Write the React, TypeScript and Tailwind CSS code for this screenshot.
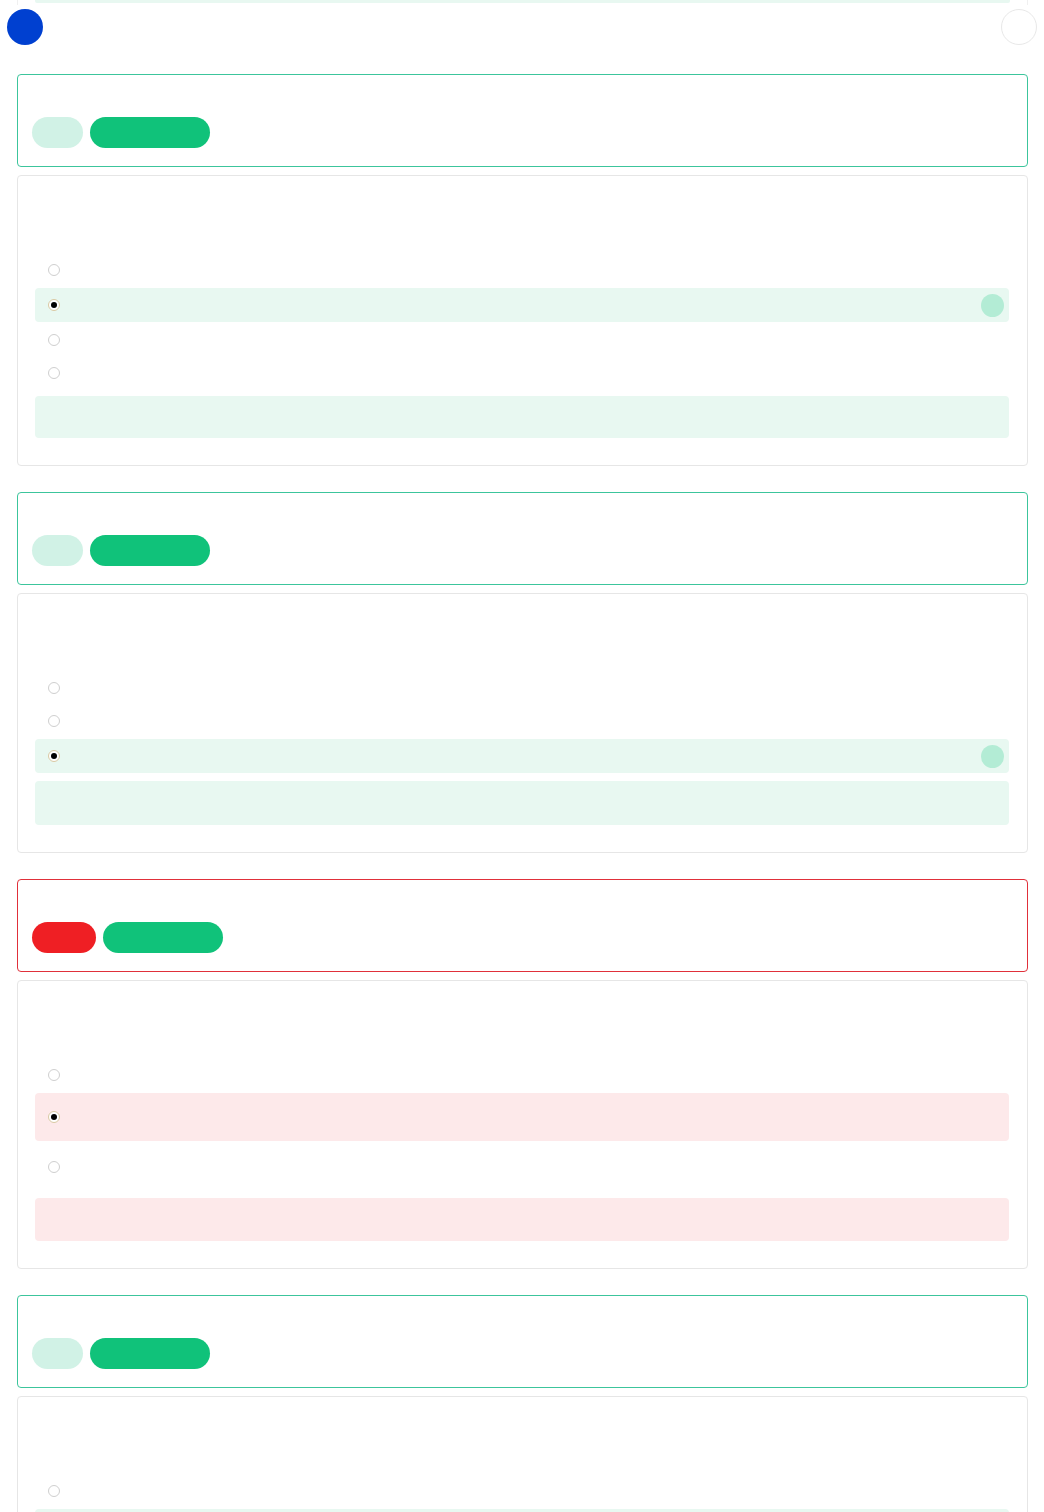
type Option = { h: number; selected?: boolean };

type Question = {
  wrong?: boolean;
  options: Option[];
  explainH: number;
};

const questions: Question[] = [
  { options: [{ h: 30 }, { h: 34, selected: true }, { h: 30 }, { h: 30 }], explainH: 42 },
  { options: [{ h: 30 }, { h: 30 }, { h: 34, selected: true }], explainH: 44 },
  { wrong: true, options: [{ h: 30 }, { h: 48, selected: true }, { h: 46 }], explainH: 43 },
  { options: [{ h: 30 }, { h: 34, selected: true }], explainH: 42 },
];

function Radio({ checked }: { checked?: boolean }) {
  if (checked) {
    return (
      <span className="flex h-[12px] w-[12px] items-center justify-center rounded-full border border-[#d9c9a3] bg-white">
        <span className="h-[6px] w-[6px] rounded-full bg-black" />
      </span>
    );
  }
  return <span className="h-[12px] w-[12px] rounded-full border border-[#cfcfcf] bg-white" />;
}

function QuestionBlock({ q }: { q: Question }) {
  const selBg = q.wrong ? 'bg-[#fde9ea]' : 'bg-[#e8f8f1]';
  return (
    <div className="flex flex-col">
      <div
        className={`rounded-[4px] border px-[14px] pt-[42px] pb-[18px] ${
          q.wrong ? 'border-[#e0303a]' : 'border-[#3cc59c]'
        }`}
      >
        <div className="flex items-center gap-[7px]">
          {q.wrong ? (
            <span className="h-[31px] w-[64px] rounded-full bg-[#ef1f24]" />
          ) : (
            <span className="h-[31px] w-[51px] rounded-full bg-[#d1f2e6]" />
          )}
          <span className="h-[31px] w-[120px] rounded-full bg-[#10c27a]" />
        </div>
      </div>

      <div className="mt-[8px] rounded-[4px] border border-[#e6e6e6] pl-[17px] pr-[18px] pt-[17px] pb-[27px]">
        <div className="h-[62px]" />
        <div className="flex flex-col gap-[3px]">
          {q.options.map((o, i) => (
            <div
              key={i}
              style={{ height: o.h }}
              className={`flex items-center justify-between rounded-[4px] pl-[13px] pr-[5px] ${
                o.selected ? selBg : ''
              }`}
            >
              <Radio checked={o.selected} />
              {o.selected && !q.wrong && (
                <span className="h-[23px] w-[23px] rounded-full bg-[#b3ecd5]" />
              )}
            </div>
          ))}
        </div>
        <div
          style={{ height: q.explainH }}
          className={`mt-[8px] rounded-[4px] ${q.wrong ? 'bg-[#fde9ea]' : 'bg-[#e8f8f1]'}`}
        />
      </div>
    </div>
  );
}

export default function App() {
  return (
    <div className="min-h-[1512px] bg-white font-['Liberation_Sans',sans-serif]">
      <div className="ml-[17px] mr-[16px] h-[5px] border-x border-[#f0f0f0] px-[17px]">
        <div className="h-[3px] rounded-b-[2px] bg-[#e8f8f1]" />
      </div>

      <div className="mt-[4px] flex items-center justify-between px-[7px]">
        <span className="h-[36px] w-[36px] rounded-full bg-[#0040d0]" />
        <span className="h-[36px] w-[36px] rounded-full border border-[#e8e8e8] bg-white" />
      </div>

      <div className="mt-[29px] flex flex-col gap-[26px] pl-[17px] pr-[16px]">
        {questions.map((q, i) => (
          <QuestionBlock key={i} q={q} />
        ))}
      </div>
    </div>
  );
}
